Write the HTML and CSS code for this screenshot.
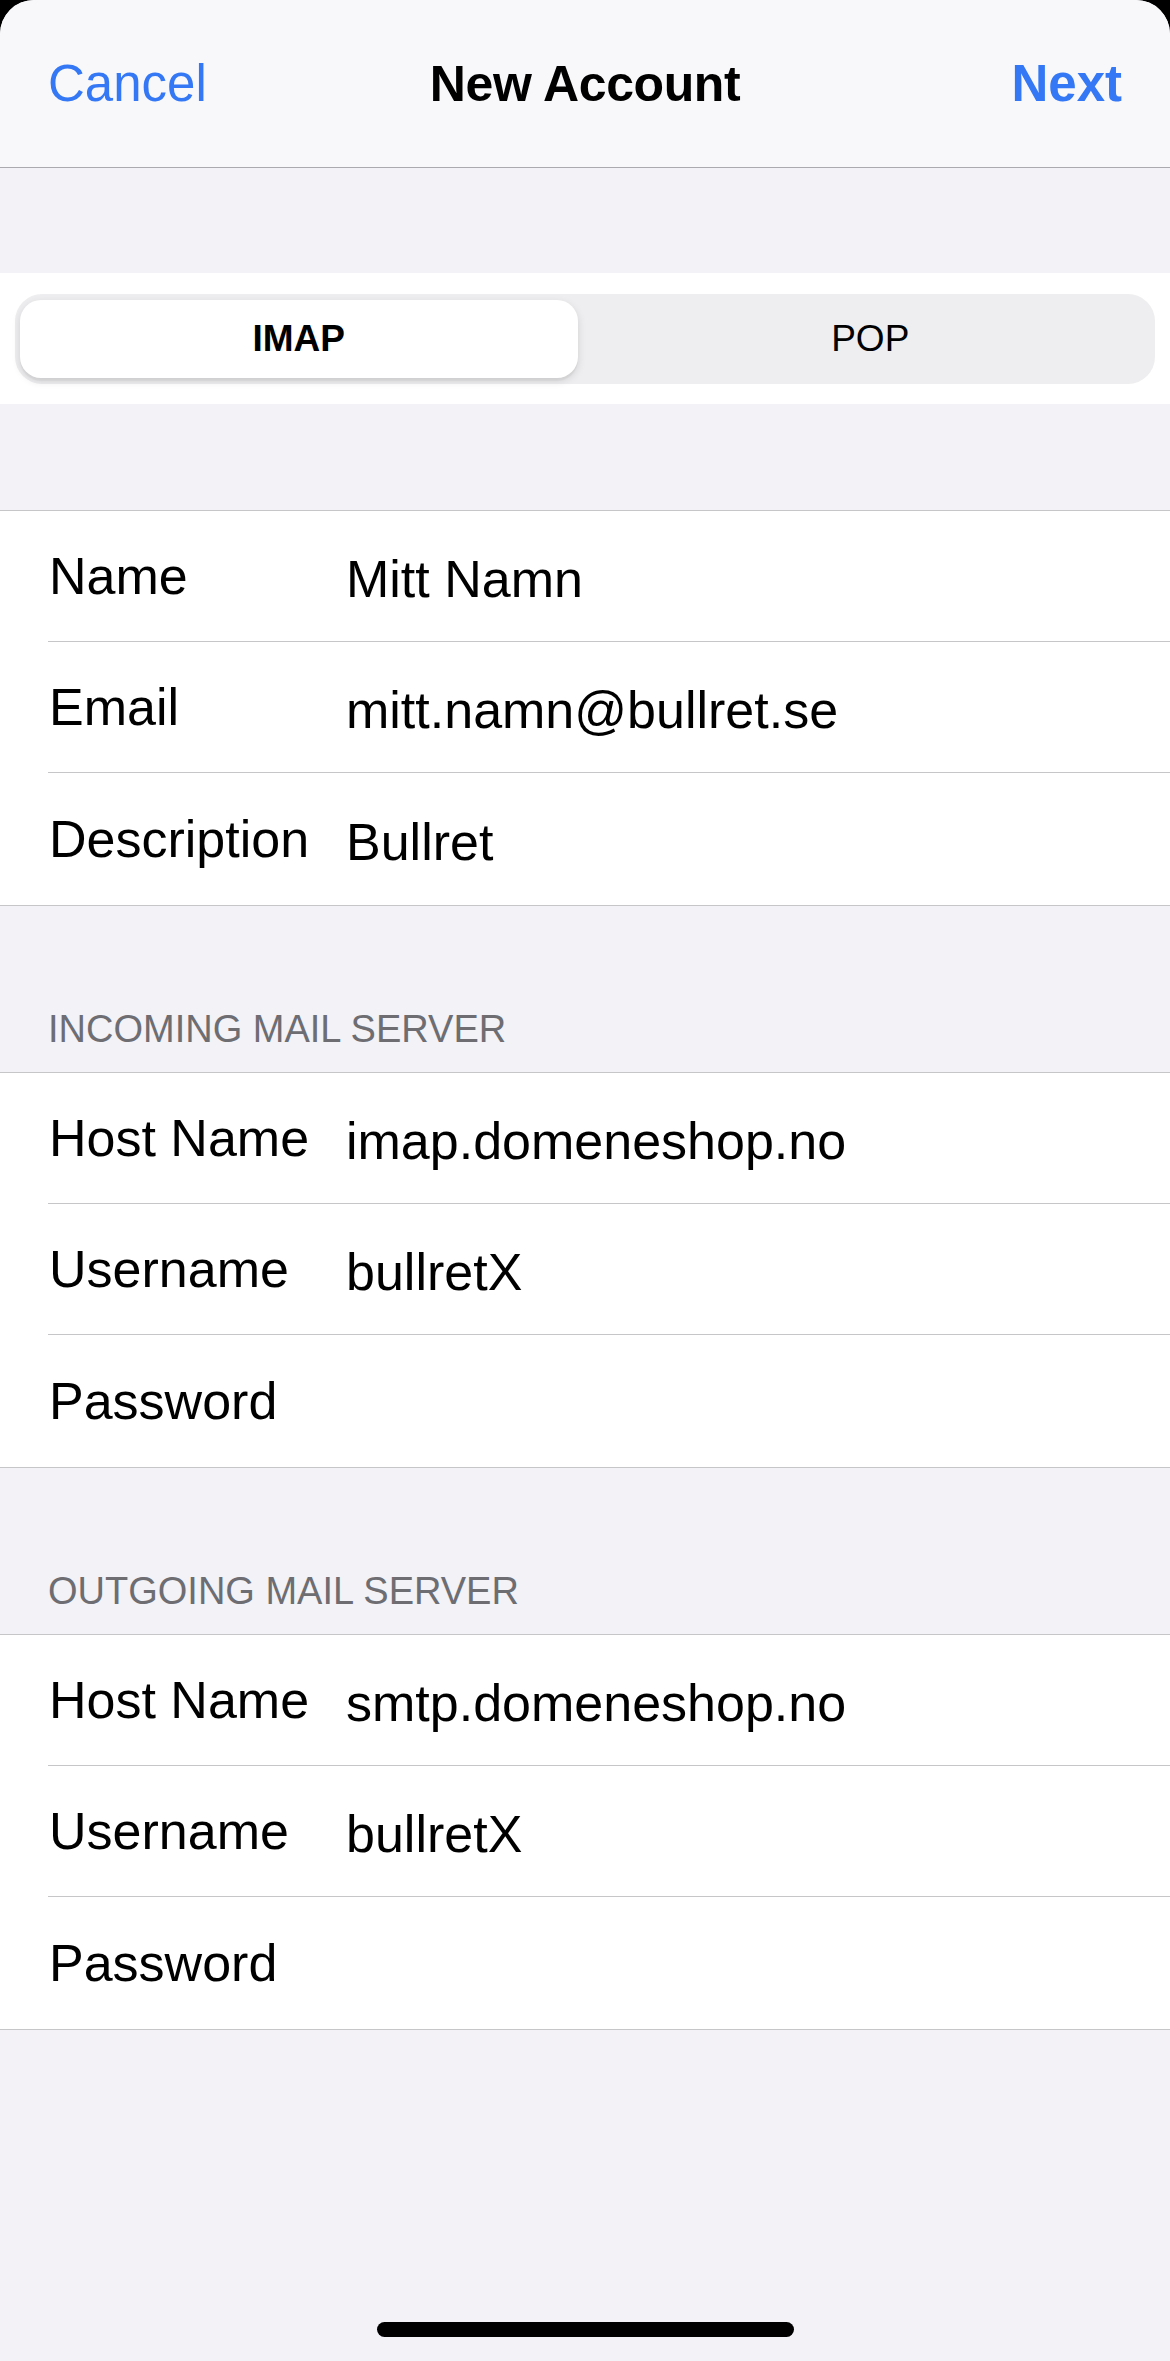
FILE: index.html
```html
<!DOCTYPE html>
<html lang="en">
<head>
<meta charset="utf-8">
<title>New Account</title>
<link rel="stylesheet" href="styles.css">
</head>
<body>
<div class="sheet">
  <header class="navbar">
    <span class="nav-btn cancel">Cancel</span>
    <span class="nav-title">New Account</span>
    <span class="nav-btn next">Next</span>
  </header>

  <div class="gap"></div>

  <div class="segment-band">
    <div class="segmented">
      <div class="seg seg-selected">IMAP</div>
      <div class="seg">POP</div>
    </div>
  </div>

  <div class="gap gap-2"></div>

  <section class="group">
    <div class="row"><div class="row-inner"><span class="label">Name</span><span class="value">Mitt Namn</span></div></div>
    <div class="row"><div class="row-inner"><span class="label">Email</span><span class="value">mitt.namn@bullret.se</span></div></div>
    <div class="row last"><div class="row-inner"><span class="label">Description</span><span class="value">Bullret</span></div></div>
  </section>

  <div class="section-header">INCOMING MAIL SERVER</div>
  <section class="group">
    <div class="row"><div class="row-inner"><span class="label">Host Name</span><span class="value">imap.domeneshop.no</span></div></div>
    <div class="row"><div class="row-inner"><span class="label">Username</span><span class="value">bullretX</span></div></div>
    <div class="row last"><div class="row-inner"><span class="label">Password</span><span class="value"></span></div></div>
  </section>

  <div class="section-header">OUTGOING MAIL SERVER</div>
  <section class="group">
    <div class="row"><div class="row-inner"><span class="label">Host Name</span><span class="value">smtp.domeneshop.no</span></div></div>
    <div class="row"><div class="row-inner"><span class="label">Username</span><span class="value">bullretX</span></div></div>
    <div class="row last"><div class="row-inner"><span class="label">Password</span><span class="value"></span></div></div>
  </section>

  <div class="spacer"></div>
  <div class="home-area"><div class="home-indicator"></div></div>
</div>
</body>
</html>
```

FILE: styles.css
```css
* { box-sizing: border-box; }

html, body {
  margin: 0;
  padding: 0;
  background: #000;
}

body {
  font-family: "Liberation Sans", Arial, Helvetica, sans-serif;
  color: #000;
}

.sheet {
  width: 1170px;
  min-height: 2361px;
  background: #f2f2f7;
  border-radius: 34px 34px 0 0;
  overflow: hidden;
  display: flex;
  flex-direction: column;
}

.navbar {
  height: 168px;
  background: #f8f8fa;
  border-bottom: 1px solid #ababaf;
  display: flex;
  align-items: center;
  justify-content: space-between;
  padding: 0 48px 0 48px;
  position: relative;
}

.nav-btn {
  font-size: 51px;
  color: #3478f6;
}

.next { font-weight: 700; }

.nav-title {
  position: absolute;
  left: 0;
  right: 0;
  text-align: center;
  font-size: 50px;
  font-weight: 700;
  letter-spacing: -0.4px;
  pointer-events: none;
}

.gap { height: 105px; }
.gap-2 { height: 106px; }

.segment-band {
  background: #fff;
  height: 131px;
  padding: 21px 15px 20px 15px;
}

.segmented {
  height: 90px;
  background: #eeeef0;
  border-radius: 27px;
  padding: 6px 6px 6px 5px;
  display: grid;
  grid-template-columns: 1fr 1fr;
  column-gap: 14px;
}

.seg {
  display: flex;
  align-items: center;
  justify-content: center;
  font-size: 37px;
  color: #000;
}

.seg-selected {
  background: #fff;
  border-radius: 21px;
  font-weight: 700;
  font-size: 37px;
  box-shadow: 0 3px 8px rgba(0, 0, 0, 0.12), 0 3px 1px rgba(0, 0, 0, 0.04);
}

.group {
  background: #fff;
  border-top: 1px solid #c6c6c8;
  border-bottom: 1px solid #c6c6c8;
}

.row {
  height: 131px;
  padding-left: 48px;
}

.row.last { height: 132px; }

.row-inner {
  height: 100%;
  border-bottom: 1px solid #c6c6c8;
  display: grid;
  grid-template-columns: 298px 1fr;
  align-items: center;
}

.row.last .row-inner { border-bottom: none; }

.label {
  font-size: 52px;
  margin-left: 1px;
  white-space: nowrap;
}

.value {
  font-size: 52px;
  position: relative;
  top: 3px;
  white-space: nowrap;
}

.section-header {
  height: 166px;
  display: flex;
  align-items: flex-end;
  padding: 0 0 20px 48px;
  font-size: 38px;
  line-height: 46px;
  color: #6d6d72;
}

.spacer { flex: 1; }

.home-area {
  display: flex;
  justify-content: center;
  padding-bottom: 24px;
}

.home-indicator {
  width: 417px;
  height: 15px;
  border-radius: 8px;
  background: #000;
}
```
